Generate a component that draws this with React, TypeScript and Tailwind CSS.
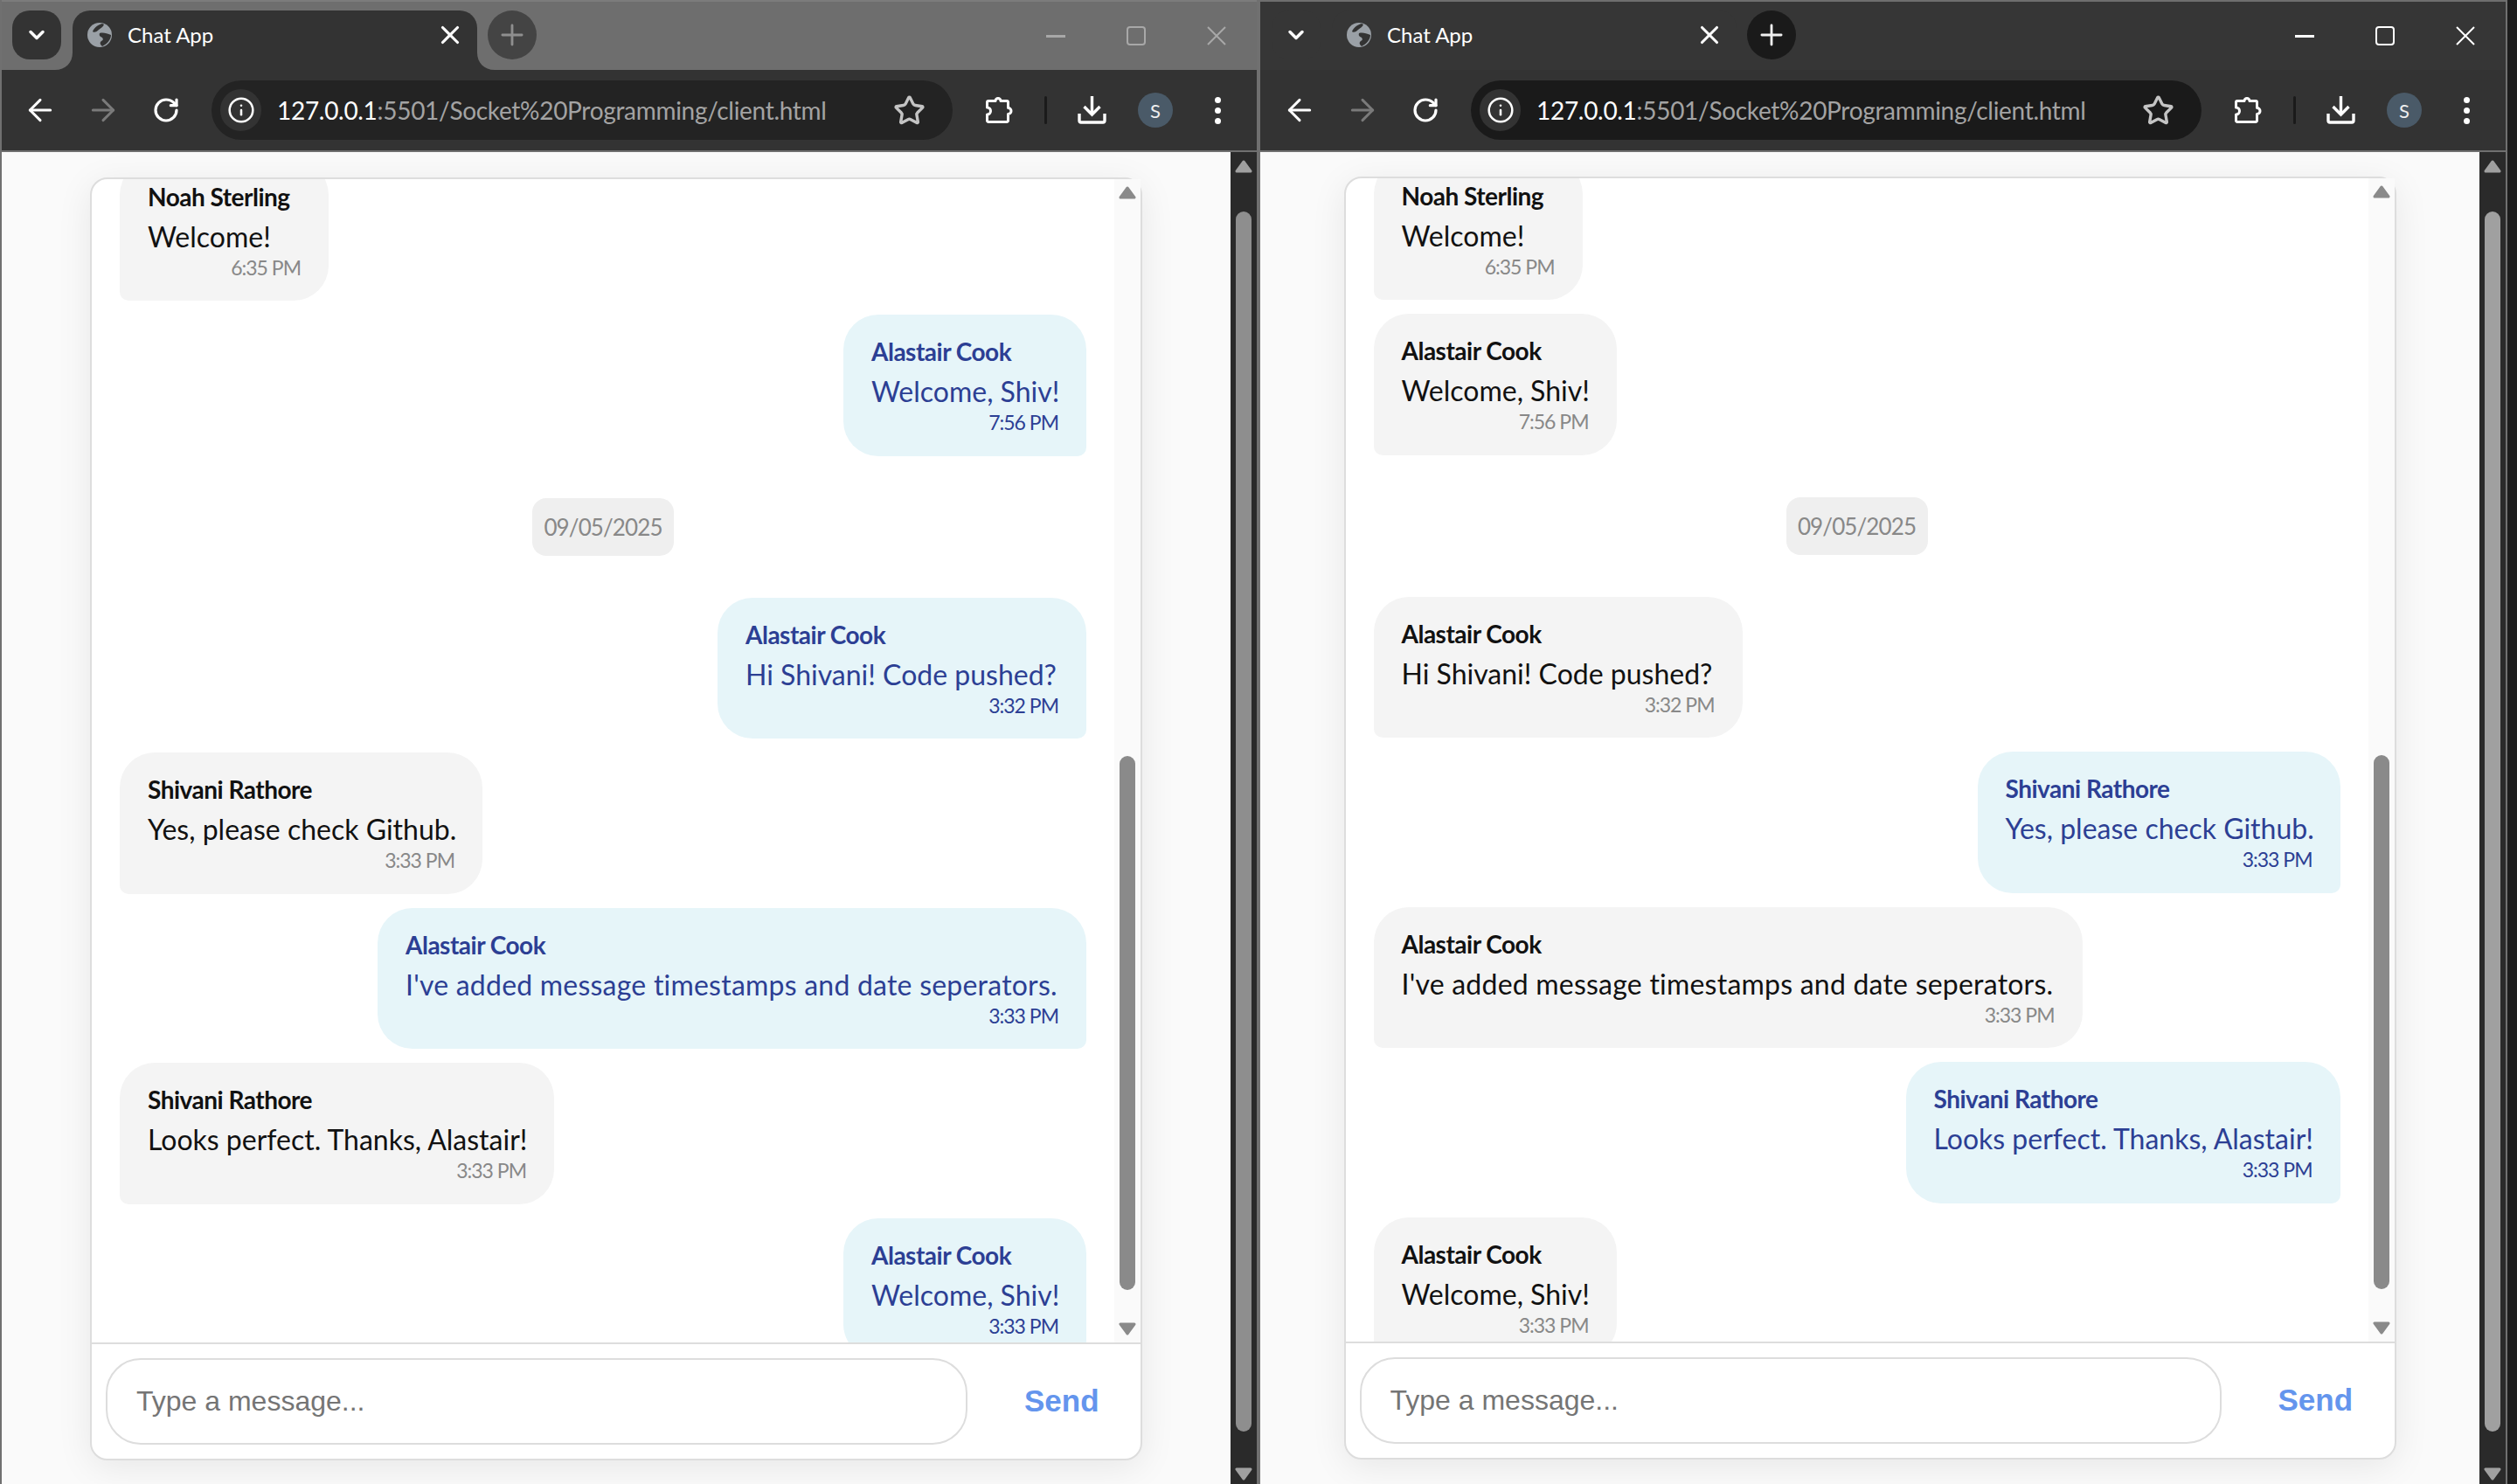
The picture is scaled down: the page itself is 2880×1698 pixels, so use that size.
import { ArrowLeft, ArrowRight, ChevronDown, Info, Plus, RotateCw, Star, X } from "lucide-react";

const messages = [
  { id: 1, sender: "Noah Sterling", text: "Welcome!", time: "6:35 PM", width: "w-[239px]", tracking: "" },
  { id: 2, sender: "Alastair Cook", text: "Welcome, Shiv!", time: "7:56 PM", width: "w-[278px]", tracking: "" },
  { id: 3, date: "09/05/2025" },
  { id: 4, sender: "Alastair Cook", text: "Hi Shivani! Code pushed?", time: "3:32 PM", width: "w-[422px]", tracking: "" },
  { id: 5, sender: "Shivani Rathore", text: "Yes, please check Github.", time: "3:33 PM", width: "w-[415px]", tracking: "" },
  { id: 6, sender: "Alastair Cook", text: "I've added message timestamps and date seperators.", time: "3:33 PM", width: "w-[811px]", tracking: "tracking-[0.22px]" },
  { id: 7, sender: "Shivani Rathore", text: "Looks perfect. Thanks, Alastair!", time: "3:33 PM", width: "w-[497px]", tracking: "" },
  { id: 8, sender: "Alastair Cook", text: "Welcome, Shiv!", time: "3:33 PM", width: "w-[278px]", tracking: "" },
];

const leftWindow = {
  me: "Alastair Cook",
  root: "w-[1440px]",
  title: "bg-[#6e6e6e] border-t-[#7c7c7c] pl-[12px]",
  menu: "bg-[#333333]",
  tab: "bg-[#333333]",
  newTab: "bg-[#444444] text-[#8f8f8f]",
  controls: "text-[#a8a8a8]",
  toolbar: "pl-[8px]",
  omnibox: "bg-[#232323]",
  card: "w-[1204px] mt-[29px] h-[1468px]",
  thumb: "bg-[#8e8e8e]",
  arrow: "#a0a0a0",
  flare: true,
};

const rightWindow = {
  me: "Shivani Rathore",
  root: "w-[1429px]",
  title: "bg-[#363636] border-t-[#6e6e6e] pl-[13px]",
  menu: "bg-[#363636]",
  tab: "bg-[#363636]",
  newTab: "bg-[#1a1a1a] text-[#f0f0f0]",
  controls: "text-white",
  toolbar: "pl-[9px]",
  omnibox: "bg-[#1a1a1a]",
  card: "w-[1204px] mt-[28px] h-[1468px]",
  thumb: "bg-[#a0a0a0]",
  arrow: "#a0a0a0",
  flare: false,
};

const Triangle = ({ down = false, fill }: { down?: boolean; fill: string }) => (
  <svg width="20" height="15" viewBox="0 0 20 15" className={down ? "rotate-180" : ""}>
    <polygon points="10,2 18,13 2,13" fill={fill} stroke={fill} strokeWidth="3" strokeLinejoin="round" />
  </svg>
);

const GlobeIcon = () => (
  <svg width="28" height="28" viewBox="0 0 28 28">
    <circle cx="14" cy="14" r="14" fill="#9aa0a6" />
    <path d="M17 1 C13 2 8 5 6 10 C8 12 11 10 13 8 C15 6 18 5 19 2 Z" fill="#333333" />
    <path d="M14 12 C18 11 22 12 27 14 C27 19 23 24 17 27 C15 25 14 24 15 22 C17 20 19 20 17 17 C15 16 13 15 14 12 Z" fill="#333333" />
  </svg>
);

const PuzzleIcon = () => (
  <svg width="32" height="32" viewBox="0 0 32 32" fill="none" stroke="white" strokeWidth="3" strokeLinejoin="round">
    <path d="M3 5.5 H11 a3 3 0 0 1 6 0 H24 a1.5 1.5 0 0 1 1.5 1.5 V13.5 a3 3 0 0 1 0 7 V28 a1.5 1.5 0 0 1 -1.5 1.5 H3 a1.5 1.5 0 0 1 -1.5 -1.5 V21 a4 4 0 0 0 0 -8 V7 A1.5 1.5 0 0 1 3 5.5 Z" />
  </svg>
);

const DownloadIcon = () => (
  <svg width="33" height="32" viewBox="0 0 33 32" fill="none" stroke="white" strokeWidth="3.4">
    <path d="M16.5 0 V20" />
    <path d="M7.5 12 L16.5 21 L25.5 12" />
    <path d="M2 20 V28 a2 2 0 0 0 2 2 H29 a2 2 0 0 0 2 -2 V20" />
  </svg>
);

const TabCorner = ({ side }: { side: "left" | "right" }) => (
  <svg
    width="20"
    height="20"
    viewBox="0 0 20 20"
    className={side === "left" ? "absolute bottom-0 -left-[20px]" : "absolute bottom-0 -right-[20px] -scale-x-100"}
  >
    <path d="M20 0 V20 H0 C12 20 20 12 20 0 Z" fill="#333333" />
  </svg>
);

const Bubble = ({ msg, mine }: { msg: (typeof messages)[number]; mine: boolean }) => (
  <div
    className={
      mine
        ? `${msg.width} shrink-0 self-end bg-[#e6f5f9] text-[#2c3f94] rounded-[40px] rounded-br-[10px] px-[32px] pt-[23px] pb-[24.5px]`
        : `${msg.width} shrink-0 self-start bg-[#f4f4f4] text-[#111111] rounded-[40px] rounded-bl-[10px] px-[32px] pt-[23px] pb-[24.5px]`
    }
  >
    <p className="text-[28px] leading-[38px] font-bold tracking-[-0.5px] mb-[5px] whitespace-nowrap">{msg.sender}</p>
    <p className={`text-[32px] leading-[44px] whitespace-nowrap ${msg.tracking}`}>{msg.text}</p>
    <p className={mine ? "text-[23px] leading-[27px] tracking-[-1px] text-right" : "text-[23px] leading-[27px] tracking-[-1px] text-right text-[#888888]"}>{msg.time}</p>
  </div>
);

const ChatWindow = ({ config }: { config: typeof leftWindow }) => (
  <div className={`${config.root} h-full shrink-0 flex flex-col border-x-2 border-[#707070] font-[Lato,sans-serif]`}>
    {/* Tab strip */}
    <div className={`h-[80px] shrink-0 flex items-end border-t-2 ${config.title}`}>
      <div className={`w-[56px] h-[56px] mb-[12px] rounded-[20px] flex items-center justify-center text-white ${config.menu}`}>
        <ChevronDown size={28} strokeWidth={3} />
      </div>
      <div className={`relative ml-[13px] w-[463px] h-[68px] rounded-t-[20px] flex items-center pl-[17px] pr-[15px] pb-[12px] ${config.tab}`}>
        {config.flare && <TabCorner side="left" />}
        {config.flare && <TabCorner side="right" />}
        <GlobeIcon />
        <span className="ml-[18px] text-[24px] text-white">Chat App</span>
        <X size={34} strokeWidth={2.2} className="ml-auto -mr-[1px] text-white" />
      </div>
      <div className={`ml-[12px] mb-[12px] w-[56px] h-[56px] rounded-full flex items-center justify-center ${config.newTab}`}>
        <Plus size={38} strokeWidth={1.8} />
      </div>
      <div className={`ml-auto self-stretch flex ${config.controls}`}>
        <div className="w-[92px] flex items-center justify-center">
          <svg width="22" height="3"><rect width="22" height="3" fill="currentColor" /></svg>
        </div>
        <div className="w-[92px] flex items-center justify-center">
          <svg width="22" height="22" viewBox="0 0 22 22" fill="none" stroke="currentColor" strokeWidth="2">
            <rect x="1" y="1" width="20" height="20" rx="3" />
          </svg>
        </div>
        <div className="w-[92px] flex items-center justify-center">
          <svg width="22" height="22" viewBox="0 0 22 22" fill="none" stroke="currentColor" strokeWidth="2">
            <path d="M1 1 L21 21 M21 1 L1 21" />
          </svg>
        </div>
      </div>
    </div>

    {/* Toolbar */}
    <div className={`h-[94px] shrink-0 flex items-center bg-[#333333] border-b-2 border-[#707070] ${config.toolbar}`}>
      <div className="w-[72px] flex justify-center text-white"><ArrowLeft size={40} strokeWidth={1.8} /></div>
      <div className="w-[72px] flex justify-center text-[#7a7a7a]"><ArrowRight size={40} strokeWidth={1.8} /></div>
      <div className="w-[72px] flex justify-center text-white"><RotateCw size={32} strokeWidth={2.4} /></div>
      <div className={`ml-[16px] flex-1 h-[68px] rounded-full flex items-center pl-[10px] pr-[31px] ${config.omnibox}`}>
        <div className="w-[47px] h-[48px] rounded-full bg-[#333333] flex items-center justify-center text-white">
          <Info size={32} strokeWidth={1.9} />
        </div>
        <span className="ml-[18px] text-[28px] tracking-[-0.3px] text-[#a3a3a3] whitespace-nowrap">
          <span className="text-white">127.0.0.1</span>:5501/Socket%20Programming/client.html
        </span>
        <Star size={37} strokeWidth={2.2} className="ml-auto text-[#c4c4c4]" />
      </div>
      <div className="w-[348px] shrink-0 flex items-center">
        <div className="ml-[38px]"><PuzzleIcon /></div>
        <div className="ml-[35px] w-[3px] h-[32px] rounded-full bg-[#1a1a1a]" />
        <div className="ml-[35px]"><DownloadIcon /></div>
        <div className="ml-[36px] w-[40px] h-[40px] rounded-full bg-[#4a5a68] flex items-center justify-center text-[22px] text-[#eeeeee]">S</div>
        <div className="ml-[40px] w-[22px] flex flex-col items-center gap-[5px]">
          <span className="w-[7px] h-[7px] rounded-full bg-white" />
          <span className="w-[7px] h-[7px] rounded-full bg-white" />
          <span className="w-[7px] h-[7px] rounded-full bg-white" />
        </div>
      </div>
    </div>

    {/* Page */}
    <div className="flex-1 min-h-0 flex">
      <div className="flex-1 min-w-0 bg-[#fafafa] flex justify-center">
        <div className={`${config.card} shrink-0 flex flex-col bg-white border-2 border-[#dddddd] rounded-[20px] shadow-[0_8px_40px_rgba(0,0,0,0.08)]`}>
          <div className="flex-1 min-h-0 flex border-b-2 border-[#dddddd]">
            <div className="flex-1 min-w-0 overflow-hidden pl-[32px] pr-[32px]">
              <div className="-mt-[22.5px] flex flex-col gap-[16px]">
                {messages.map((msg) =>
                  msg.date ? (
                    <div key={msg.id} className="self-center my-[32px] w-[162px] h-[66px] pt-[2px] rounded-[16px] bg-[#efefef] text-[#888888] text-[26px] tracking-[-0.9px] flex items-center justify-center">
                      {msg.date}
                    </div>
                  ) : (
                    <Bubble key={msg.id} msg={msg} mine={msg.sender === config.me} />
                  )
                )}
              </div>
            </div>
            <div className="w-[30px] shrink-0 bg-[#fafafa] flex flex-col items-center pt-[8px] pb-[8px]">
              <Triangle fill="#8a8a8a" />
              <div className="mt-[637px] w-[18px] h-[611px] rounded-full bg-[#8a8a8a]" />
              <div className="mt-auto"><Triangle down fill="#8a8a8a" /></div>
            </div>
          </div>
          <div className="h-[131px] shrink-0 flex items-center pl-[16px]">
            <input
              readOnly
              placeholder="Type a message..."
              className="flex-1 min-w-0 h-[99px] pl-[33px] border-2 border-[#dddddd] rounded-[40px] bg-white text-[32px] font-['Liberation_Sans',Arial,sans-serif] placeholder:text-[#757575] outline-none"
            />
            <div className="w-[198px] shrink-0 pl-[65px] text-[35px] font-bold text-[#6495ed] font-['Liberation_Sans',Arial,sans-serif]">Send</div>
          </div>
        </div>
      </div>
      <div className="w-[30px] shrink-0 bg-[#2a2a2a] flex flex-col items-center pt-[9px] pb-[4px]">
        <Triangle fill={config.arrow} />
        <div className={`mt-[44px] w-[18px] h-[1396px] rounded-full ${config.thumb}`} />
        <div className="mt-auto"><Triangle down fill={config.arrow} /></div>
      </div>
    </div>
  </div>
);

const App = () => (
  <div className="w-[2880px] h-[1698px] overflow-hidden flex bg-[#1c1c1c]">
    <ChatWindow config={leftWindow} />
    <ChatWindow config={rightWindow} />
  </div>
);

export default App;
